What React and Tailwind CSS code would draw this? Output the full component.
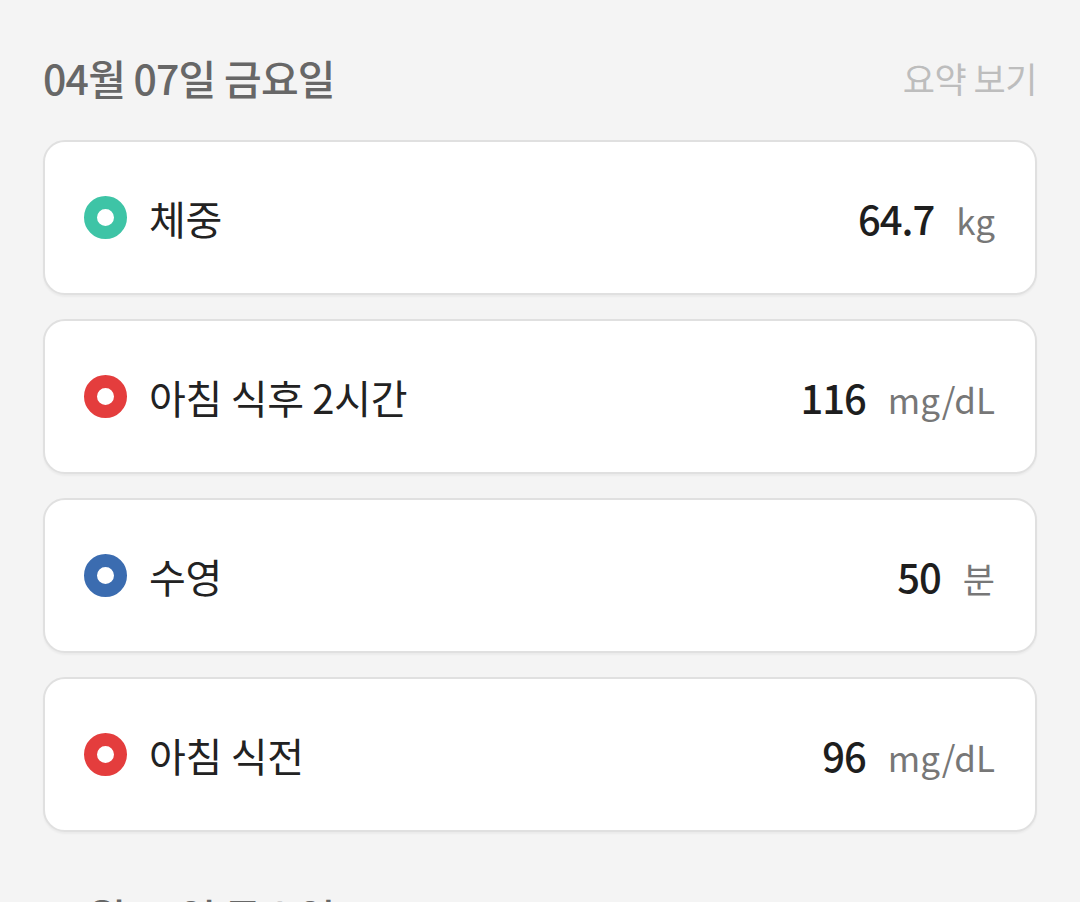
const font = { fontFamily: '"Noto Sans CJK KR", "Noto Sans", sans-serif' };

const records = [
  { label: "체중", value: "64.7", unit: "kg", color: "border-[#3ec4a6]" },
  { label: "아침 식후 2시간", value: "116", unit: "mg/dL", color: "border-[#e43d3d]" },
  { label: "수영", value: "50", unit: "분", color: "border-[#3b6cb0]" },
  { label: "아침 식전", value: "96", unit: "mg/dL", color: "border-[#e43d3d]" },
];

function DayHeader({ date }) {
  return (
    <div className="flex h-[56px] items-center justify-between">
      <h2 className="text-[41px] font-medium tracking-[-0.8px] text-[#676767]">{date}</h2>
      <button className="text-[35px] text-[#bdbdbd] tracking-[-0.5px]">요약 보기</button>
    </div>
  );
}

function RecordCard({ item }) {
  return (
    <div className="flex h-[155px] items-center justify-between rounded-[22px] border-2 border-[#e0e0e0] bg-white pl-[39px] pr-[40px] shadow-[0_2px_2px_rgba(0,0,0,0.04)]">
      <div className="flex items-center gap-[22px]">
        <span className={`h-[43px] w-[43px] rounded-full border-[13px] bg-white ${item.color}`} />
        <span className="text-[40px] text-[#222222] tracking-[-0.3px]">{item.label}</span>
      </div>
      <div className="flex items-baseline gap-[22px]">
        <span className="text-[40px] font-medium text-[#1e1e1e] tracking-[-1px]">{item.value}</span>
        <span className="text-[35px] text-[#777777]">{item.unit}</span>
      </div>
    </div>
  );
}

export default function App() {
  return (
    <div className="min-h-screen overflow-hidden bg-[#f4f4f4] pl-[43px] pr-[43px] pt-[50px]" style={font}>
      <DayHeader date="04월 07일 금요일" />

      <div className="mt-[34px] flex flex-col gap-[24px]">
        {records.map((r) => (
          <RecordCard key={r.label} item={r} />
        ))}
      </div>

      {/* next day, cut off at the bottom */}
      <div className="mt-[57px]">
        <DayHeader date="04월 06일 목요일" />
      </div>
    </div>
  );
}
